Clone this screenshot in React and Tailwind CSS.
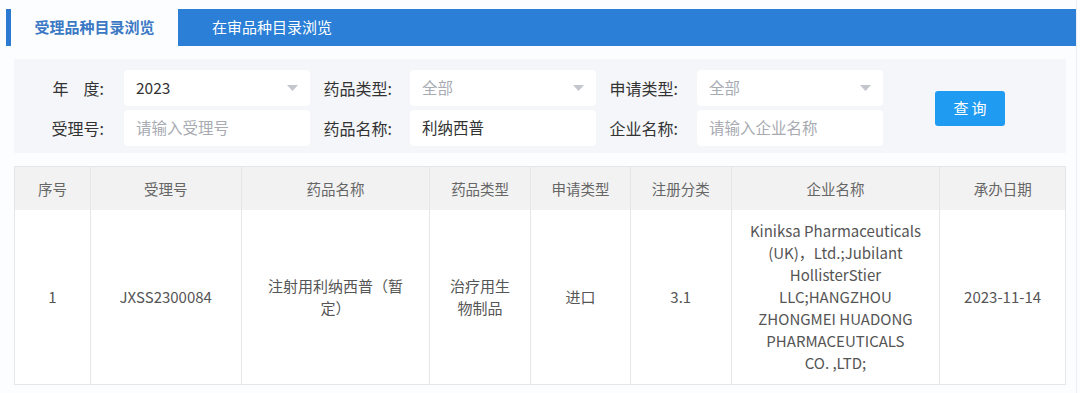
import React from "react";

const COLS = [
  { key: "no", title: "序号", w: "w-[75px]" },
  { key: "acc", title: "受理号", w: "w-[151px]" },
  { key: "name", title: "药品名称", w: "w-[189px]" },
  { key: "type", title: "药品类型", w: "w-[101px]" },
  { key: "apply", title: "申请类型", w: "w-[100px]" },
  { key: "reg", title: "注册分类", w: "w-[101px]" },
  { key: "corp", title: "企业名称", w: "w-[209px]" },
  { key: "date", title: "承办日期", w: "w-[126px]" },
];

// company name keeps the line breaks seen in the listing
const CORP_LINES = [
  "Kiniksa Pharmaceuticals",
  "(UK)，Ltd.;Jubilant",
  "HollisterStier",
  "LLC;HANGZHOU",
  "ZHONGMEI HUADONG",
  "PHARMACEUTICALS",
  "CO. ,LTD;",
];

const ROWS = [
  {
    no: "1",
    acc: "JXSS2300084",
    name: "注射用利纳西普（暂定）",
    type: "治疗用生物制品",
    apply: "进口",
    reg: "3.1",
    corp: CORP_LINES.map((l, i) => (
      <React.Fragment key={i}>
        {i > 0 && <br />}
        {l}
      </React.Fragment>
    )),
    date: "2023-11-14",
  },
];

function Caret() {
  return (
    <svg width="11" height="6" viewBox="0 0 11 6" className="shrink-0">
      <path d="M0 0 L11 0 L5.5 6 Z" fill="#c3c6cc" />
    </svg>
  );
}

function Label({ children, pr }) {
  return <div className={`h-[36px] flex items-center justify-end text-[16px] text-[#333] ${pr}`}>{children}</div>;
}

function Select({ value, muted }) {
  return (
    <div className="h-[36px] bg-white rounded-[4px] flex items-center justify-between pl-[12px] pr-[12px]">
      <span className={`text-[15.5px] ${muted ? "text-[#a8abb2]" : "text-[#333]"}`}>{value}</span>
      <Caret />
    </div>
  );
}

function Input({ value, placeholder }) {
  return (
    <div className="h-[36px] bg-white rounded-[4px] flex items-center pl-[12px]">
      {value ? (
        <span className="text-[15.5px] text-[#333]">{value}</span>
      ) : (
        <span className="text-[15.5px] text-[#a8abb2]">{placeholder}</span>
      )}
    </div>
  );
}

export default function App() {
  return (
    <div
      className="w-[1080px] h-[393px] bg-[#fcfdff] overflow-hidden"
      style={{ fontFamily: '"Noto Sans CJK SC", "Noto Sans", sans-serif' }}
    >
      <div className="w-[1077px] h-full border-r border-[#eceef2]">
        {/* tabs */}
        <div className="flex pt-[9px] h-[46px]">
          <div className="w-[5px] ml-[6px] bg-[#2c7bd0]" />
          <div className="w-[167px] flex items-center justify-center text-[15px] font-bold text-[#3b79c4]">
            受理品种目录浏览
          </div>
          <div className="flex-1 bg-[#2b7fd6] flex items-center pl-[34px] text-[15px] text-white">
            在审品种目录浏览
          </div>
        </div>

        {/* filter */}
        <div className="ml-[14px] w-[1052px] mt-[13px] bg-[#f4f6f9] pt-[11px] pb-[7px] flex items-center">
          <div className="grid grid-cols-[110px_186px_100px_186px_101px_186px] gap-y-[4px]">
            <Label pr="pr-[20px]">
              <span>年</span>
              <span className="w-[15px]" />
              <span>度:</span>
            </Label>
            <Select value="2023" />
            <Label pr="pr-[18px]">药品类型:</Label>
            <Select value="全部" muted />
            <Label pr="pr-[19px]">申请类型:</Label>
            <Select value="全部" muted />
            <Label pr="pr-[20px]">受理号:</Label>
            <Input placeholder="请输入受理号" />
            <Label pr="pr-[18px]">药品名称:</Label>
            <Input value="利纳西普" />
            <Label pr="pr-[19px]">企业名称:</Label>
            <Input placeholder="请输入企业名称" />
          </div>
          <button className="ml-[52px] w-[70px] h-[35px] rounded-[3px] bg-[#1f9bf2] text-white text-[15px] tracking-[3px] pl-[3px]">
            查询
          </button>
        </div>

        {/* table */}
        <div className="ml-[14px] w-[1052px] mt-[13px] bg-white border border-[#e6e6e6]">
          <div className="flex h-[43px] bg-[#f2f2f2]">
            {COLS.map((c, i) => (
              <div
                key={c.key}
                className={`${c.w} flex items-center justify-center text-[14.5px] text-[#666] ${i > 0 ? "border-l border-[#e6e6e6]" : ""}`}
              >
                {c.title}
              </div>
            ))}
          </div>
          {ROWS.map((r) => (
            <div key={r.no} className="flex h-[174px]">
              {COLS.map((c, i) => (
                <div
                  key={c.key}
                  className={`${c.w} flex items-center justify-center px-[16px] text-center text-[15px] leading-[22px] text-[#555] ${i > 0 ? "border-l border-[#e6e6e6]" : ""}`}
                >
                  <div>{r[c.key]}</div>
                </div>
              ))}
            </div>
          ))}
        </div>
      </div>
    </div>
  );
}
